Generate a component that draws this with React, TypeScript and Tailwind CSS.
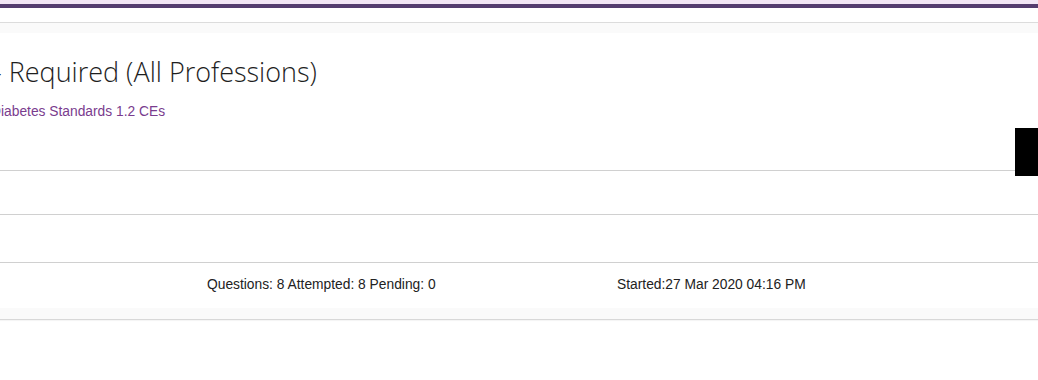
export default function App() {
  return (
    <div className="relative h-[380px] w-[1038px] overflow-hidden bg-white font-['Liberation_Sans',Arial,sans-serif]">
      {/* top stripe */}
      <div className="h-[4px] bg-[#f2e6f5]" />
      <div className="h-[4px] bg-[#553d6f]" />
      <div className="h-[14px] border-b border-[#dcdcdc] bg-white box-content" />
      <div className="h-[10px] bg-[#fafafa]" />

      {/* course header */}
      <div className="-ml-[7px] pt-[19px]">
        <h1 className="font-['Open_Sans',sans-serif] text-[27px] font-light leading-[40px] text-[#1e1e1e]">
          - Required (All Professions)
        </h1>
        <p className="-ml-[2px] mt-[12px] text-[13.8px] leading-[16px] text-[#7a3c8e]">
          Diabetes Standards 1.2 CEs
        </p>
      </div>

      {/* rows */}
      <div className="mt-[50px]">
        <div className="h-[44px] border-t border-[#d0d0d0]" />
        <div className="h-[48px] border-t border-[#d0d0d0]" />
        <div className="border-t border-[#d0d0d0]">
          <div className="flex h-[45px] items-center text-[13.8px] text-[#222]">
            <span className="ml-[207px] w-[410px]">Questions: 8 Attempted: 8 Pending: 0</span>
            <span>Started:27 Mar 2020 04:16 PM</span>
          </div>
          <div className="h-[12px] border-b border-[#d8d8d8] bg-[#fafafa] shadow-[0_1px_1px_rgba(0,0,0,0.04)]" />
        </div>
      </div>

      {/* feedback tab */}
      <div className="absolute right-0 top-[128px] h-[48px] w-[23px] bg-black" />
    </div>
  );
}
